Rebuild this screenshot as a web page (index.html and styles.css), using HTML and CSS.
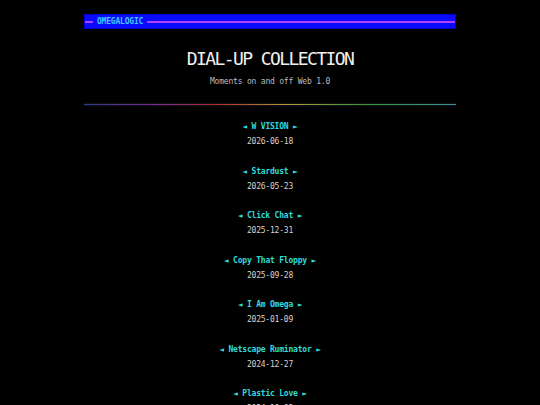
FILE: index.html
```html
<!DOCTYPE html>
<html>
<head>
<meta charset="utf-8">
<link rel="stylesheet" href="styles.css">
</head>
<body>
<div class="page">
  <div class="topbar">
    <span class="line short"></span>
    <span class="brand">OMEGALOGIC</span>
    <span class="line long"></span>
  </div>
  <header class="hero">
    <h1 class="title">DIAL-UP COLLECTION</h1>
    <p class="subtitle">Moments on and off Web 1.0</p>
  </header>
  <div class="rainbow"></div>
  <ul class="list">
    <li class="item"><div class="name">◄ W VISION ►</div><div class="date">2026-06-18</div></li>
    <li class="item"><div class="name">◄ Stardust ►</div><div class="date">2026-05-23</div></li>
    <li class="item"><div class="name">◄ Click Chat ►</div><div class="date">2025-12-31</div></li>
    <li class="item"><div class="name">◄ Copy That Floppy ►</div><div class="date">2025-09-28</div></li>
    <li class="item"><div class="name">◄ I Am Omega ►</div><div class="date">2025-01-09</div></li>
    <li class="item"><div class="name">◄ Netscape Ruminator ►</div><div class="date">2024-12-27</div></li>
    <li class="item"><div class="name">◄ Plastic Love ►</div><div class="date">2024-10-02</div></li>
  </ul>
</div>
</body>
</html>
```
FILE: styles.css
```css
html, body {
  margin: 0;
  padding: 0;
  background: #000;
}
body {
  font-family: "DejaVu Sans Mono", "Liberation Mono", monospace;
  color: #d0d0d0;
}
.page {
  width: 372px;
  margin: 0 auto;
  padding-top: 14px;
}
.topbar {
  height: 15px;
  background: #0a0aff;
  box-shadow: inset 0 0 0 1px #0000c8;
  display: flex;
  align-items: center;
  padding: 0 1px;
  box-sizing: border-box;
}
.line {
  height: 2px;
  background: #b040ff;
}
.line.short { width: 8px; }
.line.long { flex: 1; }
.brand {
  font-size: 8px;
  font-weight: bold;
  letter-spacing: -0.2px;
  color: #3cc8ff;
  padding: 0 4px;
  line-height: 15px;
}
.hero {
  text-align: center;
  padding-top: 19px;
}
.title {
  margin: 0;
  font-size: 18px;
  font-weight: normal;
  letter-spacing: -1.6px;
  color: #f0f0f0;
  line-height: 22px;
}
.subtitle {
  margin: 6px 0 0;
  font-size: 8px;
  letter-spacing: -0.2px;
  color: #bcbcbc;
  line-height: 12px;
}
.rainbow {
  margin-top: 16px;
  height: 1px;
  background: linear-gradient(90deg, #2a3a90, #7a2a90 20%, #b02a2a 35%, #b09a3a 55%, #3a963a 75%, #3a9090);
  box-shadow: 0 0 2px rgba(150, 120, 200, 0.5);
}
.list {
  list-style: none;
  margin: 0;
  padding: 15px 0 0;
  text-align: center;
}
.item {
  height: 44.5px;
}
.name {
  font-size: 8px;
  font-weight: bold;
  letter-spacing: -0.2px;
  color: #30dcdc;
  line-height: 14px;
}
.date {
  font-size: 8px;
  letter-spacing: -0.2px;
  color: #d4d4d4;
  line-height: 16px;
}
```
